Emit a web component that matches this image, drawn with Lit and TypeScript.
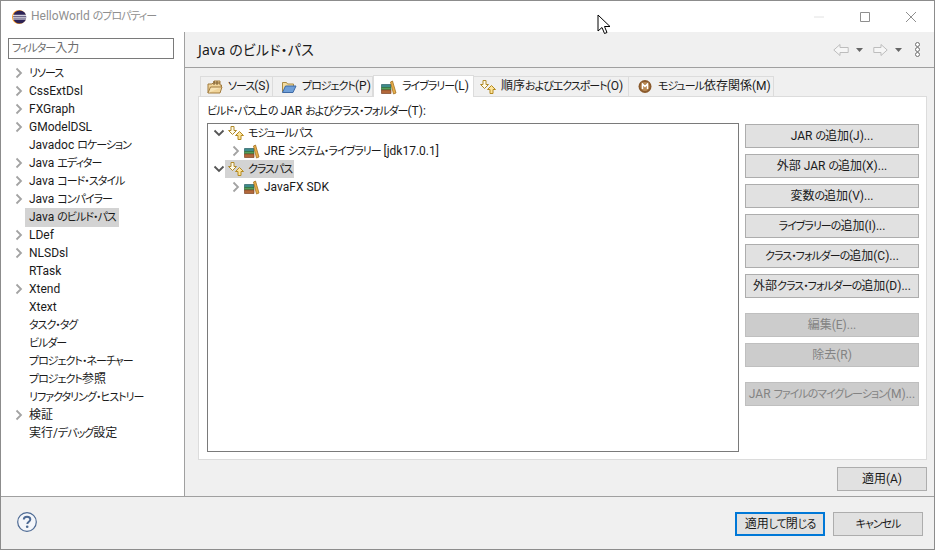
import { LitElement, html, css, svg } from "lit";
import { customElement } from "lit/decorators.js";

const chevR = svg`<svg class="chev" width="12" height="12" viewBox="0 0 12 12"><path d="M3.500 1.500 8 6l-4.500 4.500" fill="none" stroke="#a3a3a3" stroke-width="1.800"/></svg>`;
const chevD = svg`<svg class="chev" width="12" height="12" viewBox="0 0 12 12"><path d="M1.500 3.500 6 8l4.500-4.500" fill="none" stroke="#555" stroke-width="1.800"/></svg>`;
const lib = svg`<svg class="ico" width="16" height="16" viewBox="0 0 16 16"><path d="M.5 5.500h9.500v3H.5z" fill="#3d8c8a" stroke="#2b5f66" stroke-width=".7"/><path d="M.5 8.500h9.500v2.500H.5z" fill="#55a05a" stroke="#2f6d38" stroke-width=".7"/><path d="M.5 11h9.500v3.500H.5z" fill="#b2683a" stroke="#7d4526" stroke-width=".7"/><path d="M9.500 3 11.500 2l3.500 12-2.500 1z" fill="#e8b04a" stroke="#a5701f" stroke-width=".8"/></svg>`;
const paths = svg`<svg class="ico" width="16" height="16" viewBox="0 0 16 16"><path d="M3 1.500h3v4h2.500l-4 4-4-4H3z" fill="#fffbea" stroke="#b08a2a" stroke-width="1"/><path d="M11.500 6.500l4 4H13v4h-3v-4H7.500z" fill="#fde49a" stroke="#b58a22" stroke-width="1"/></svg>`;
const srcFolder = svg`<svg class="ico" width="16" height="16" viewBox="0 0 16 16"><path d="M1 5h4l1-1h1V2h6v4h1.500v2H15l-2 6H1z" fill="#f0d49a" stroke="#a17a3c" stroke-width="1"/><path d="M7 2v4M10 2v4M13 4H7" stroke="#7a5a2c" stroke-width="1" fill="none"/><path d="M1 14l2.500-6H15" stroke="#a17a3c" fill="#f7e3b4" stroke-width="1"/></svg>`;
const projFolder = svg`<svg class="ico" width="16" height="16" viewBox="0 0 16 16"><path d="M1.500 13V3.500h4l1 1.500h6v2" fill="#f4dc9f" stroke="#a98a44" stroke-width="1"/><path d="M1.500 13.500l3-6.500h10.500l-3 6.500z" fill="#6f9fd8" stroke="#3f6aa5" stroke-width="1"/></svg>`;
const modIcon = svg`<svg class="ico" width="16" height="16" viewBox="0 0 16 16"><circle cx="8" cy="7.500" r="6.500" fill="#8a5a2c"/><circle cx="8" cy="7.500" r="4.500" fill="#b98a55"/><path d="M5.500 10V5l2.500 2.500L10.500 5v5" fill="none" stroke="#fff" stroke-width="1.400"/></svg>`;

const t = (s: string) =>
  s.split(/([\u3040-\u30FF]+)/).map((part, i) => (i % 2 ? html`<span class="k">${part}</span>` : part));

const sideItems: [string, boolean][] = [
  ["リソース", true], ["CssExtDsl", true], ["FXGraph", true], ["GModelDSL", true],
  ["Javadoc ロケーション", false], ["Java エディター", true], ["Java コード・スタイル", true],
  ["Java コンパイラー", true], ["Java のビルド・パス", false], ["LDef", true], ["NLSDsl", true],
  ["RTask", false], ["Xtend", true], ["Xtext", false], ["タスク・タグ", false], ["ビルダー", false],
  ["プロジェクト・ネーチャー", false], ["プロジェクト参照", false], ["リファクタリング・ヒストリー", false],
  ["検証", true], ["実行/デバッグ設定", false],
];

@customElement("app-root")
export class AppRoot extends LitElement {
  static styles = css`
    :host {
      display: block; width: 935px; height: 550px; box-sizing: border-box; position: relative;
      border: 1px solid #8c8c8c; background: #fff; overflow: hidden; color: #1a1a1a;
      font: 12px Roboto, "Noto Sans CJK JP", sans-serif;
      font-feature-settings: "palt"; line-height: 18px;
    }
    .k { font-size: 11px; letter-spacing: -1px; }
    svg { display: block; flex: none; }
    .win { display: grid; grid-template-rows: 31px 465px 1fr; height: 100%; }
    .title { display: flex; align-items: center; padding-left: 10px; color: #8f8f8f; }
    .title .name { flex: 1; margin-left: 4px; }
    .wb { width: 46px; display: flex; justify-content: center; }
    .body { display: grid; grid-template-columns: 184px 1fr; border-bottom: 1px solid #a0a0a0; min-height: 0; }
    .side { border-right: 1px solid #a0a0a0; padding: 6px 10px 0 7px; min-width: 0; }
    .filter { box-sizing: border-box; height: 21px; border: 1px solid #7a7a7a; padding: 0 3px; color: #6d6d6d; line-height: 18px; margin-bottom: 5px; }
    .sitem { display: flex; align-items: center; height: 18px; }
    .sitem .gut { width: 17px; padding-left: 5px; box-sizing: border-box; flex: none; }
    .sitem > span { padding: 0 3px 0 4px; white-space: nowrap; }
    .sitem.sel > span { background: #d3d3d3; }
    .main { background: #f0f0f0; display: grid; grid-template-rows: 36px 1fr; min-width: 0; }
    .head { display: flex; align-items: center; border-bottom: 1px solid #a0a0a0; padding: 0 14px 0 13px; font-size: 14px; font-family: "Noto Sans", "Noto Sans CJK JP", sans-serif; }
    .head .t { flex: 1; letter-spacing: .2px; }
    .nav { display: flex; align-items: center; }
    .nav .c { margin: 0 10px 0 7px; }
    .nav .c.last { margin-right: 13px; }
    .content { padding: 6px 7px 0 13px; display: flex; flex-direction: column; }
    .tabs { display: grid; grid-template-columns: 73px 100px 101px 155px 145px; align-items: end; height: 22px; padding-left: 2px; }
    .tab { display: flex; align-items: center; gap: 5px; height: 20px; box-sizing: border-box; padding: 0 0 0 6px; border: 1px solid #dcdcdc; border-bottom: none; border-left: none; background: #f0f0f0; white-space: nowrap; }
    .tab:first-child { border-left: 1px solid #dcdcdc; }
    .tab.wide { padding-left: 8px; }
    .tab.on { height: 22px; background: #fff; border-left: 1px solid #dcdcdc; position: relative; z-index: 1; margin-bottom: -1px; padding-left: 7px; }
    .panel { box-sizing: border-box; height: 364px; background: #fff; border: 1px solid #dcdcdc; padding: 5px 7px 7px 8px; display: flex; flex-direction: column; gap: 2px; }
    .cols { flex: 1; display: grid; grid-template-columns: 532px 174px; column-gap: 6px; min-height: 0; }
    .tree { border: 1px solid #7a7a7a; }
    .row { display: flex; align-items: center; height: 18px; }
    .row .ind { width: 5px; flex: none; }
    .row.l2 .ind { width: 22px; }
    .row .txt { padding: 0 2px; }
    .row.l2 .ico { margin-left: 2px; }
    .row.l2 .txt { margin-left: 2px; white-space: nowrap; }
    .row .wrap { display: flex; align-items: center; height: 18px; padding-left: 3px; }
    .row .wrap.sel { background: #d3d3d3; }
    .row .wrap .txt { margin-left: 2px; }
    .btns { display: flex; flex-direction: column; padding-top: 1px; }
    .btn { box-sizing: border-box; height: 24px; border: 1px solid #adadad; background: #e1e1e1; display: flex; align-items: center; justify-content: center; white-space: nowrap; flex: none; }
    .btns .btn { margin-bottom: 6px; }
    .btns .gap { margin-top: 9px; }
    .btn.dis { background: #cccccc; border-color: #bfbfbf; color: #838383; }
    .applyrow { display: flex; justify-content: flex-end; padding-top: 7px; }
    .applyrow .btn { width: 90px; }
    .foot { background: #f0f0f0; display: flex; align-items: flex-start; padding: 15px 11px 0 16px; }
    .foot .sp { flex: 1; }
    .foot .btn { width: 90px; margin-left: 8px; }
    .foot .btn.def { border: 2px solid #0078d7; }
    .cursor { position: absolute; left: 596px; top: 13px; }
  `;

  render() {
    return html`<div class="win">
      <div class="title">
        <svg width="16" height="16" viewBox="0 0 16 16"><circle cx="8" cy="8" r="7" fill="#f7941e"/><circle cx="8.700" cy="8" r="6.600" fill="#2c2255"/><path d="M2 6.300h13M2 8.200h13.500M2 10h13" stroke="#fff" stroke-width="1"/></svg>
        <span class="name">${t("HelloWorld のプロパティー")}</span>
        <div class="wb"><svg width="10" height="10" viewBox="0 0 10 10"><path d="M0 5h10" stroke="#e2e2e2"/></svg></div>
        <div class="wb"><svg width="10" height="10" viewBox="0 0 10 10"><path d="M.5.500h9v9h-9z" fill="none" stroke="#8f8f8f"/></svg></div>
        <div class="wb"><svg width="10" height="10" viewBox="0 0 10 10"><path d="M0 0l10 10M10 0 0 10" stroke="#8f8f8f"/></svg></div>
      </div>
      <div class="body">
        <div class="side">
          <div class="filter">${t("フィルター入力")}</div>
          ${sideItems.map(([s, c]) => html`<div class="sitem ${s === "Java のビルド・パス" ? "sel" : ""}"><div class="gut">${c ? chevR : ""}</div><span>${t(s)}</span></div>`)}
        </div>
        <div class="main">
          <div class="head">
            <span class="t">Java のビルド・パス</span>
            <div class="nav">
              <svg width="16" height="14" viewBox="0 0 16 14"><path d="M.8 7 7 1.500V4.500h8.200v5H7V12.500z" fill="#f6f6f6" stroke="#bdbdbd"/></svg>
              <svg class="c" width="7" height="4" viewBox="0 0 7 4"><path d="M0 0h7L3.500 4z" fill="#666"/></svg>
              <svg width="15" height="14" viewBox="0 0 15 14"><path d="M14.200 7 8 1.500V4.500H.8v5H8V12.500z" fill="#f6f6f6" stroke="#bdbdbd"/></svg>
              <svg class="c last" width="7" height="4" viewBox="0 0 7 4"><path d="M0 0h7L3.500 4z" fill="#666"/></svg>
              <svg width="5" height="15" viewBox="0 0 5 15"><g fill="#fff" stroke="#707070"><circle cx="2.500" cy="2.500" r="2"/><circle cx="2.500" cy="7.500" r="2"/><circle cx="2.500" cy="12.500" r="2"/></g></svg>
            </div>
          </div>
          <div class="content">
            <div class="tabs">
              <div class="tab">${srcFolder}<span>${t("ソース(S)")}</span></div>
              <div class="tab wide">${projFolder}<span>${t("プロジェクト(P)")}</span></div>
              <div class="tab on">${lib}<span>${t("ライブラリー(L)")}</span></div>
              <div class="tab">${paths}<span>${t("順序およびエクスポート(O)")}</span></div>
              <div class="tab wide">${modIcon}<span>${t("モジュール依存関係(M)")}</span></div>
            </div>
            <div class="panel">
              <div>${t("ビルド・パス上の JAR およびクラス・フォルダー(T):")}</div>
              <div class="cols">
                <div class="tree">
                  <div class="row"><div class="ind"></div>${chevD}<div class="wrap">${paths}<span class="txt">${t("モジュールパス")}</span></div></div>
                  <div class="row l2"><div class="ind"></div>${chevR}${lib}<span class="txt">${t("JRE システム・ライブラリー [jdk17.0.1]")}</span></div>
                  <div class="row"><div class="ind"></div>${chevD}<div class="wrap sel">${paths}<span class="txt">${t("クラスパス")}</span></div></div>
                  <div class="row l2"><div class="ind"></div>${chevR}${lib}<span class="txt">JavaFX SDK</span></div>
                </div>
                <div class="btns">
                  <div class="btn"><span>${t("JAR の追加(J)...")}</span></div>
                  <div class="btn"><span>${t("外部 JAR の追加(X)...")}</span></div>
                  <div class="btn"><span>${t("変数の追加(V)...")}</span></div>
                  <div class="btn"><span>${t("ライブラリーの追加(I)...")}</span></div>
                  <div class="btn"><span>${t("クラス・フォルダーの追加(C)...")}</span></div>
                  <div class="btn"><span>${t("外部クラス・フォルダーの追加(D)...")}</span></div>
                  <div class="btn dis gap"><span>${t("編集(E)...")}</span></div>
                  <div class="btn dis"><span>${t("除去(R)")}</span></div>
                  <div class="btn dis gap"><span>${t("JAR ファイルのマイグレーション(M)...")}</span></div>
                </div>
              </div>
            </div>
            <div class="applyrow"><div class="btn"><span>適用(A)</span></div></div>
          </div>
        </div>
      </div>
      <div class="foot">
        <svg width="20" height="20" viewBox="0 0 20 20"><circle cx="10" cy="10" r="9.300" fill="#f4f6fa" stroke="#4d6a94" stroke-width="1.200"/><path d="M6.800 7.500C6.800 5.600 8.300 4.700 10 4.700c1.900 0 3.300 1 3.300 2.700 0 2.300-3 2.300-3 4.600" fill="none" stroke="#4d6a94" stroke-width="2"/><circle cx="10.200" cy="14.800" r="1.300" fill="#4d6a94"/></svg>
        <div class="sp"></div>
        <div class="btn def"><span>${t("適用して閉じる")}</span></div>
        <div class="btn"><span>${t("キャンセル")}</span></div>
      </div>
    </div>
    <svg class="cursor" width="14" height="21" viewBox="0 0 14 21"><path d="M1 1v16l4-3.500 2.500 6 2.500-1-2.500-6H13z" fill="#fff" stroke="#000"/></svg>`;
  }
}
